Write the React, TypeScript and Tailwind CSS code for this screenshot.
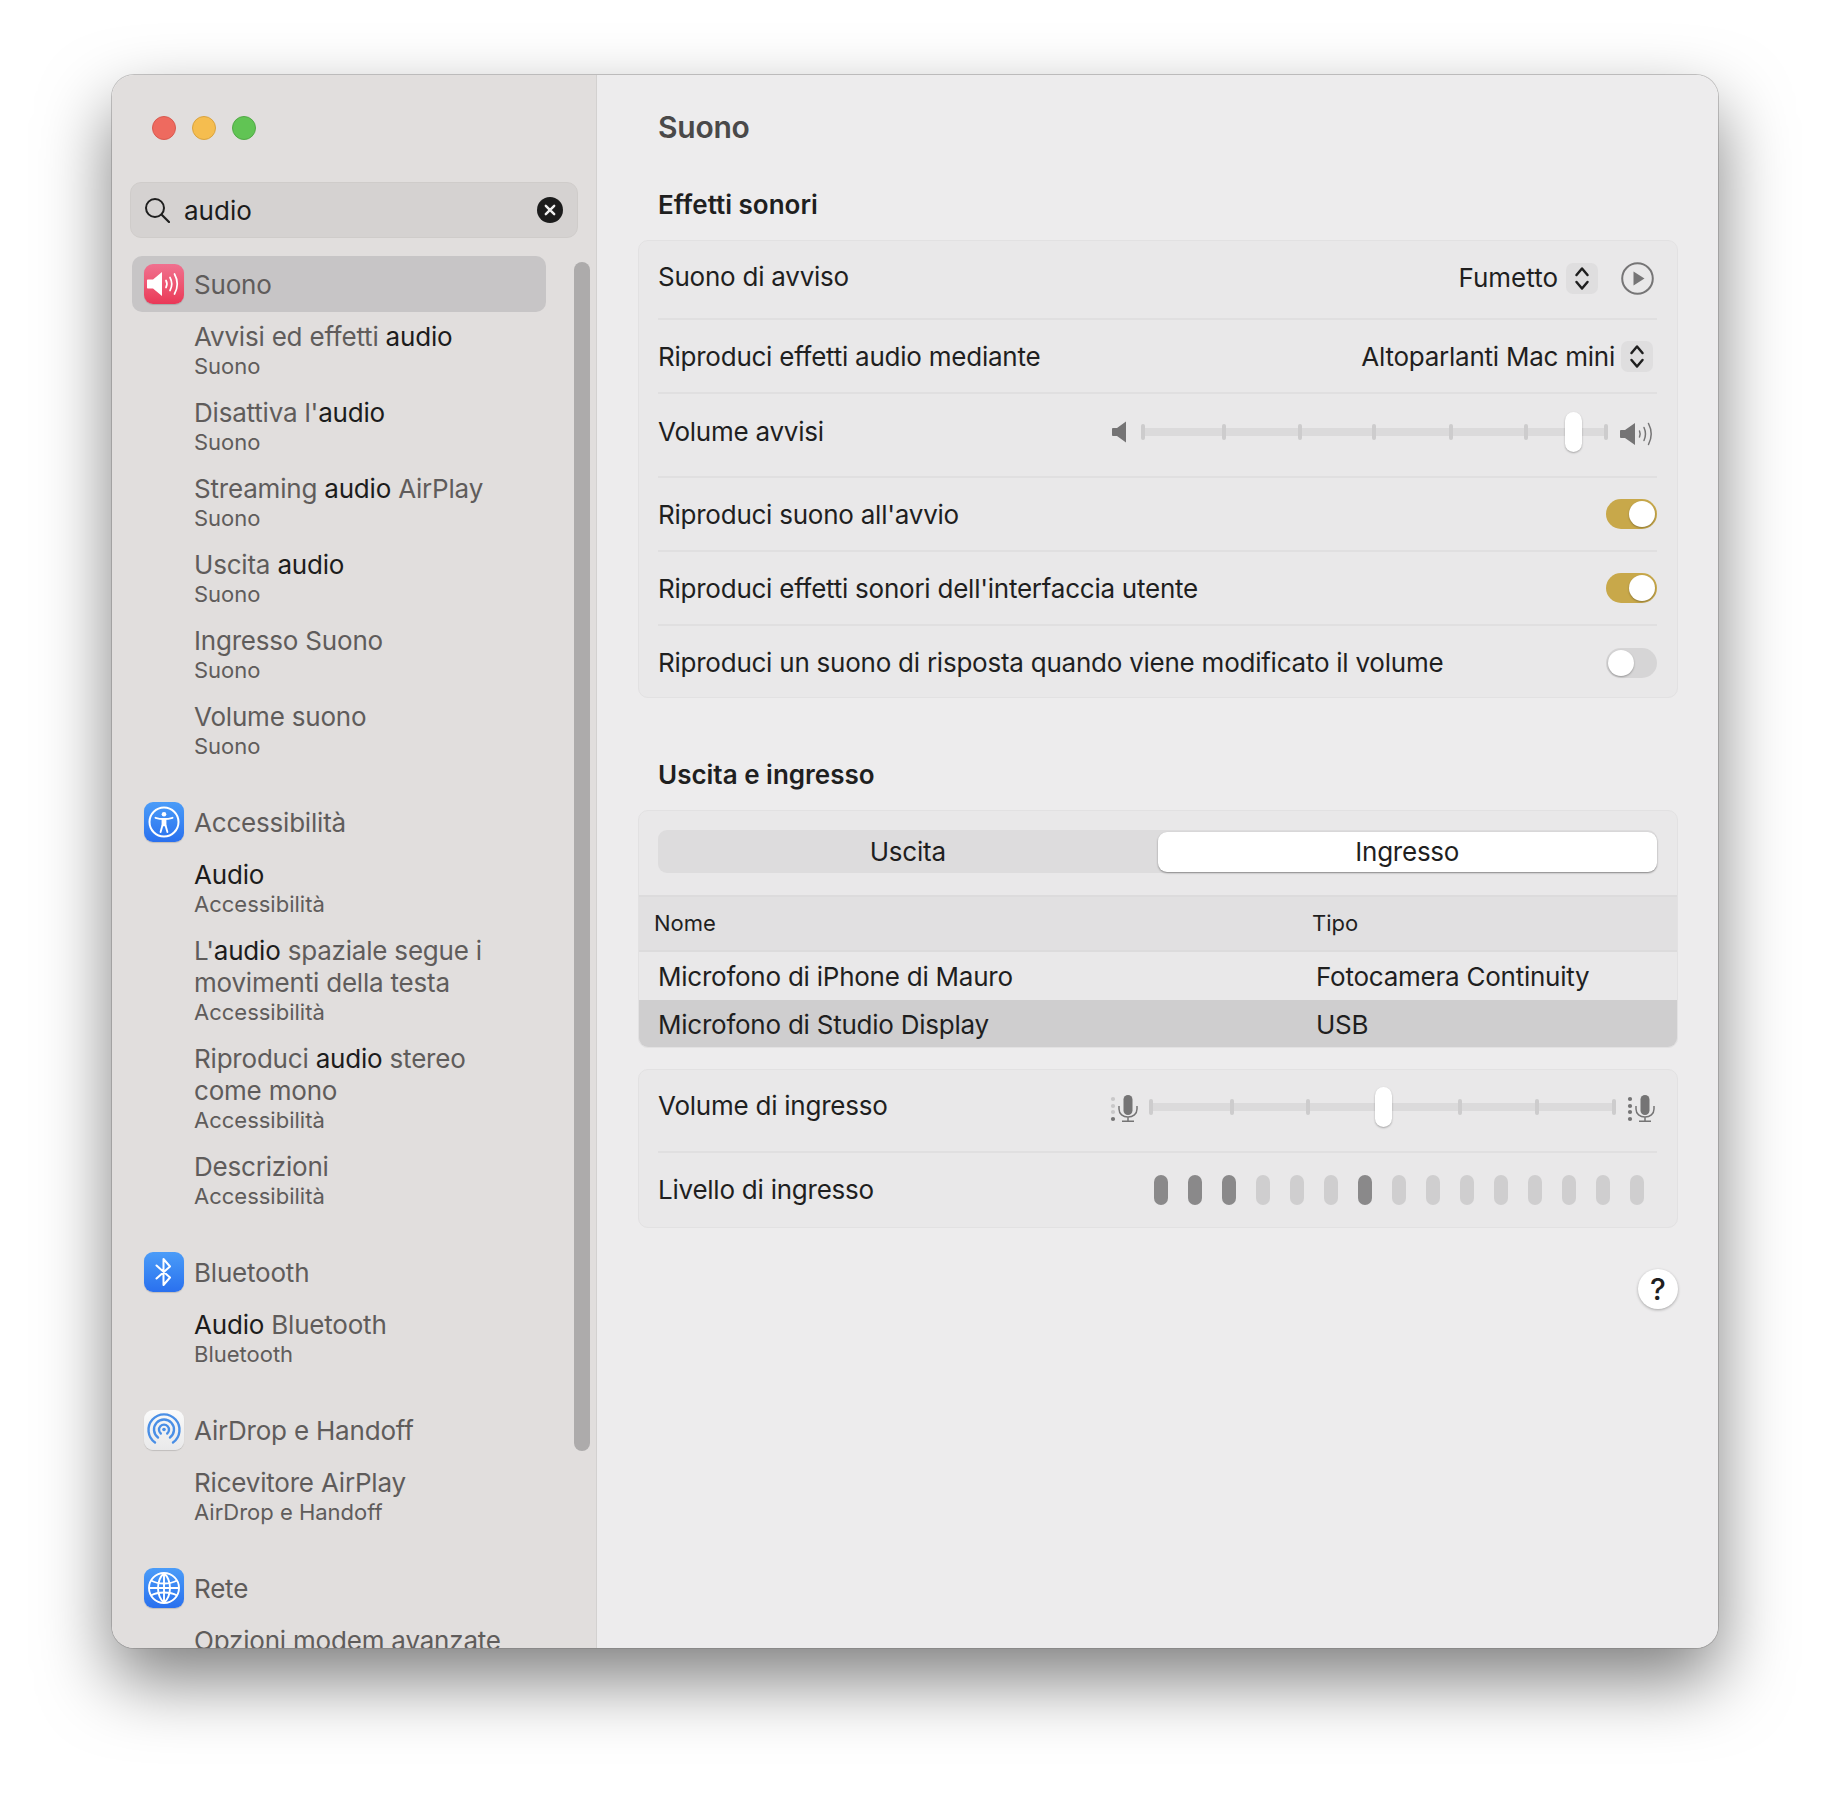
import React from 'react';

const FONT = 'font-["Inter","Liberation_Sans",sans-serif]';

// --- Sidebar data ---
type Part = { t: string; strong?: boolean };
type Item = { lines: Part[][]; sub?: string };
type Group = { name: string; icon: React.ReactNode; selected?: boolean; items: Item[] };

const SpeakerGlyph = () => (
  <svg viewBox="0 0 40 40" className="w-10 h-10">
    <path d="M4 15.5h5l9-7.5v24L9 24.5H4c-.6 0-1-.4-1-1v-7c0-.6.4-1 1-1z" fill="#fff" />
    <g fill="none" stroke="#fff" strokeWidth="1.7" strokeLinecap="round">
      <path d="M22 16.5c1.2 2.2 1.2 4.8 0 7" />
      <path d="M26 13.5c2.2 4 2.2 9 0 13" />
      <path d="M30.5 10c3.4 6.2 3.4 13.8 0 20" />
    </g>
  </svg>
);

const AccessGlyph = () => (
  <svg viewBox="0 0 40 40" className="w-10 h-10">
    <circle cx="20" cy="20" r="14.5" fill="none" stroke="#fff" strokeWidth="2" />
    <circle cx="20" cy="12.3" r="2.3" fill="#fff" />
    <path d="M11.5 15.8c5.5 1.6 11.5 1.6 17 0" fill="none" stroke="#fff" strokeWidth="1.9" strokeLinecap="round" />
    <path d="M17.6 16.8h4.8v6.2l-.3 1.2h-4.2l-.3-1.2z" fill="#fff" />
    <path d="M18.4 23.5L16.6 30M21.6 23.5L23.4 30" fill="none" stroke="#fff" strokeWidth="1.9" strokeLinecap="round" />
  </svg>
);

const BluetoothGlyph = () => (
  <svg viewBox="0 0 40 40" className="w-10 h-10">
    <path d="M12.5 13.5L26 25.5 19.5 33V7L26 14.5 12.5 26.5" fill="none" stroke="#fff" strokeWidth="2" strokeLinejoin="round" strokeLinecap="round" />
  </svg>
);

const AirDropGlyph = () => (
  <svg viewBox="0 0 40 40" className="w-10 h-10">
    <g fill="none" stroke="#4a8fe6" strokeWidth="2.4" strokeLinecap="round">
      <path d="M11 32.5A15.5 15.5 0 1 1 29 32.5" />
      <path d="M14 27.5A10 10 0 1 1 26 27.5" />
      <path d="M16.8 23.5A5 5 0 1 1 23.2 23.5" />
    </g>
    <circle cx="20" cy="19.5" r="1.8" fill="#4a8fe6" />
  </svg>
);

const GlobeGlyph = () => (
  <svg viewBox="0 0 40 40" className="w-10 h-10">
    <g fill="none" stroke="#fff" strokeWidth="1.9">
      <circle cx="20" cy="20" r="15" />
      <path d="M20 5c-8 8-8 22 0 30M20 5c8 8 8 22 0 30M20 5v30" />
      <path d="M7 12.5c7 4 19 4 26 0M5 20h30M7 27.5c7-4 19-4 26 0" />
    </g>
  </svg>
);

const IconBox = ({ className, children }: { className: string; children: React.ReactNode }) => (
  <div className={`w-10 h-10 rounded-[9px] flex items-center justify-center shrink-0 shadow-[0_1px_1px_rgba(0,0,0,0.15)] ${className}`}>
    {children}
  </div>
);

const BLUE = 'bg-linear-to-b from-[#4b9cf8] to-[#2a70ee]';

const groups: Group[] = [
  {
    name: 'Suono',
    selected: true,
    icon: <IconBox className="bg-linear-to-b from-[#f0708f] to-[#ea3757]"><SpeakerGlyph /></IconBox>,
    items: [
      { lines: [[{ t: 'Avvisi ed effetti ' }, { t: 'audio', strong: true }]], sub: 'Suono' },
      { lines: [[{ t: "Disattiva l'" }, { t: 'audio', strong: true }]], sub: 'Suono' },
      { lines: [[{ t: 'Streaming ' }, { t: 'audio', strong: true }, { t: ' AirPlay' }]], sub: 'Suono' },
      { lines: [[{ t: 'Uscita ' }, { t: 'audio', strong: true }]], sub: 'Suono' },
      { lines: [[{ t: 'Ingresso Suono' }]], sub: 'Suono' },
      { lines: [[{ t: 'Volume suono' }]], sub: 'Suono' },
    ],
  },
  {
    name: 'Accessibilità',
    icon: <IconBox className={BLUE}><AccessGlyph /></IconBox>,
    items: [
      { lines: [[{ t: 'Audio', strong: true }]], sub: 'Accessibilità' },
      {
        lines: [
          [{ t: "L'" }, { t: 'audio', strong: true }, { t: ' spaziale segue i' }],
          [{ t: 'movimenti della testa' }],
        ],
        sub: 'Accessibilità',
      },
      {
        lines: [
          [{ t: 'Riproduci ' }, { t: 'audio', strong: true }, { t: ' stereo' }],
          [{ t: 'come mono' }],
        ],
        sub: 'Accessibilità',
      },
      { lines: [[{ t: 'Descrizioni' }]], sub: 'Accessibilità' },
    ],
  },
  {
    name: 'Bluetooth',
    icon: <IconBox className={BLUE}><BluetoothGlyph /></IconBox>,
    items: [{ lines: [[{ t: 'Audio', strong: true }, { t: ' Bluetooth' }]], sub: 'Bluetooth' }],
  },
  {
    name: 'AirDrop e Handoff',
    icon: <IconBox className="bg-linear-to-b from-[#fafafa] to-[#e9e9ea]"><AirDropGlyph /></IconBox>,
    items: [{ lines: [[{ t: 'Ricevitore AirPlay' }]], sub: 'AirDrop e Handoff' }],
  },
  {
    name: 'Rete',
    icon: <IconBox className={BLUE}><GlobeGlyph /></IconBox>,
    items: [{ lines: [[{ t: 'Opzioni modem avanzate' }]] }],
  },
];

const Sidebar = () => (
  <aside className="relative w-[485px] shrink-0 h-full bg-[#e1dedd] border-r border-[#d3d1d0] overflow-hidden">
    {/* Traffic lights */}
    <div className="flex gap-4 pl-10 pt-[41px]">
      <div className="w-6 h-6 rounded-full bg-[#ee6a5f] border border-[#d85a50]" />
      <div className="w-6 h-6 rounded-full bg-[#f5bd4f] border border-[#d9a33f]" />
      <div className="w-6 h-6 rounded-full bg-[#61c454] border border-[#52a947]" />
    </div>

    {/* Search */}
    <div className="mt-[42px] mx-[18px] h-14 rounded-[11px] bg-[#d5d2d1] border border-[#cfccca] flex items-center pl-[13px] pr-[14px]">
      <svg viewBox="0 0 26 26" className="w-[26px] h-[26px] shrink-0">
        <circle cx="11" cy="11" r="9" fill="none" stroke="#1f1f1f" strokeWidth="2" />
        <path d="M17.5 17.5L25 25" stroke="#1f1f1f" strokeWidth="2.2" strokeLinecap="round" />
      </svg>
      <span className="ml-[14px] text-[26px] text-[#1c1c1c] flex-1">audio</span>
      <svg viewBox="0 0 26 26" className="w-[26px] h-[26px] shrink-0">
        <circle cx="13" cy="13" r="13" fill="#1c1c1c" />
        <path d="M8.8 8.8l8.4 8.4M17.2 8.8l-8.4 8.4" stroke="#eee" strokeWidth="2.4" strokeLinecap="round" />
      </svg>
    </div>

    {/* Results */}
    <div className="mt-[18px] ml-5 w-[414px] flex flex-col gap-5">
      {groups.map((g) => (
        <div key={g.name}>
          <div className={`h-14 rounded-[10px] flex items-center pl-3 gap-[10px] text-[26px] tracking-[-0.2px] text-[#5f5c5b] ${g.selected ? 'bg-[#c7c5c6]' : ''}`}>
            {g.icon}
            <span>{g.name}</span>
          </div>
          <div className="mt-[6px] pl-[62px]">
            {g.items.map((item, i) => (
              <div key={i} className="pt-[3px] pb-[15px]">
                {item.lines.map((line, j) => (
                  <div key={j} className="text-[26px] leading-8 tracking-[-0.2px] text-[#5f5c5b] whitespace-nowrap">
                    {line.map((p, k) => (
                      <span key={k} className={p.strong ? 'text-[#1c1c1c]' : ''}>{p.t}</span>
                    ))}
                  </div>
                ))}
                {item.sub && <div className="text-[22px] leading-[26px] text-[#5f5c5b]">{item.sub}</div>}
              </div>
            ))}
          </div>
        </div>
      ))}
    </div>

    {/* Overlay scrollbar */}
    <div className="absolute left-[462px] top-[187px] w-4 h-[1189px] rounded-full bg-[#adabab]" />
  </aside>
);

// --- Small controls ---
const Stepper = () => (
  <div className="w-8 h-[31px] rounded-[7px] bg-[#dfdedf] flex items-center justify-center">
    <svg viewBox="0 0 16 27" className="w-4 h-[27px]">
      <path d="M2.5 10L8 3.5 13.5 10M2.5 17L8 23.5 13.5 17" fill="none" stroke="#1f1f1f" strokeWidth="2.5" strokeLinecap="round" strokeLinejoin="round" />
    </svg>
  </div>
);

const Toggle = ({ on }: { on: boolean }) => (
  <div className={`w-[51px] h-[30px] rounded-full flex items-center px-[2px] ${on ? 'bg-[#c8a84a] justify-end' : 'bg-[#d6d5d6] justify-start'}`}>
    <div className="w-[26px] h-[26px] rounded-full bg-white shadow-[0_1px_2px_rgba(0,0,0,0.3)]" />
  </div>
);

const Slider = ({ ticks, thumb }: { ticks: number[]; thumb: number }) => (
  <div className="relative w-[467px] h-10">
    <div className="absolute left-0 right-0 top-4 h-2 bg-[#dbdadb]" />
    {ticks.map((x) => (
      <div key={x} className="absolute top-3 w-1 h-4 rounded-sm bg-[#cdcccd]" style={{ left: x }} />
    ))}
    <div className="absolute top-0 w-[17px] h-10 rounded-full bg-white shadow-[0_1px_2px_rgba(0,0,0,0.3)]" style={{ left: thumb }} />
  </div>
);

const SpeakerLow = () => (
  <svg viewBox="0 0 15 22" className="w-[15px] h-[22px]">
    <path d="M1 7h4l9-6.5v21L5 15H1c-.5 0-1-.5-1-1V8c0-.5.5-1 1-1z" fill="#757475" />
  </svg>
);

const SpeakerHigh = () => (
  <svg viewBox="0 0 33 24" className="w-[33px] h-6">
    <path d="M1 8h4l10-7v22L5 16H1c-.5 0-1-.5-1-1V9c0-.5.5-1 1-1z" fill="#757475" />
    <g fill="none" stroke="#757475" strokeWidth="1.5" strokeLinecap="round">
      <path d="M19.5 9c.9 2 .9 4 0 6" />
      <path d="M24 5.5c1.8 4 1.8 9 0 13" />
      <path d="M28.5 1.5c3.4 6.6 3.4 14.4 0 21" />
    </g>
  </svg>
);

const Mic = ({ level }: { level: number }) => (
  <svg viewBox="0 0 29 30" className="w-[29px] h-[30px]">
    {[7, 14, 20, 27].map((y, i) => (
      <circle key={y} cx="3" cy={y} r="2.1" fill={3 - i < level ? '#757475' : '#c9c8c9'} />
    ))}
    <rect x="13.5" y="3" width="9" height="20" rx="4.5" fill="#757475" />
    <path d="M9 14v3c0 5 4 8 9 8s9-3 9-8v-3M18 25v4M12 29.2h12" fill="none" stroke="#757475" strokeWidth="1.5" />
  </svg>
);

const Row = ({ className, label, labelClass = '', children }: { className: string; label: string; labelClass?: string; children?: React.ReactNode }) => (
  <div className={`ml-[19px] mr-5 flex items-center justify-between ${className}`}>
    <span className={labelClass}>{label}</span>
    <div className="flex items-center">{children}</div>
  </div>
);

const Card = ({ className, children }: { className: string; children: React.ReactNode }) => (
  <div className={`rounded-[10px] bg-[#e9e8e9] border border-[#e2e1e2] overflow-hidden text-[26px] tracking-[-0.24px] text-[#1f1f1f] ${className}`}>
    {children}
  </div>
);

const Heading = ({ className, children }: { className: string; children: React.ReactNode }) => (
  <h2 className={`pl-5 text-[26px] leading-8 font-semibold text-[#1f1f1f] ${className}`}>{children}</h2>
);

const DIVIDER = 'border-b-2 border-[#e0dfe0]';
const bars = [1, 1, 1, 0, 0, 0, 1, 0, 0, 0, 0, 0, 0, 0, 0];

const Content = () => (
  <main className="flex-1 h-full bg-[#edeced] pl-[41px] pr-10 pt-[34px] flex flex-col">
    <h1 className="pl-5 text-[30px] leading-9 font-semibold tracking-[-0.24px] text-[#4a4949]">Suono</h1>

    <Heading className="mt-11">Effetti sonori</Heading>
    <Card className="mt-[19px] h-[458px]">
      <Row className={`h-[79px] pb-[3px] ${DIVIDER}`} label="Suono di avviso" labelClass="pb-[3px]">
        <span className="mr-[8px] pb-[2px] tracking-normal">Fumetto</span>
        <Stepper />
        <svg viewBox="0 0 33 33" className="w-[33px] h-[33px] ml-[23px] mr-[3px]">
          <circle cx="16.5" cy="16.5" r="15.3" fill="none" stroke="#767576" strokeWidth="2" />
          <path d="M12.5 9.5l11 7-11 7z" fill="#767576" />
        </svg>
      </Row>
      <Row className={`h-[74px] ${DIVIDER}`} label="Riproduci effetti audio mediante">
        <span className="mr-[6px]">Altoparlanti Mac mini</span>
        <div className="mr-[4px]"><Stepper /></div>
      </Row>
      <Row className={`h-[84px] pb-[6px] ${DIVIDER}`} label="Volume avvisi" labelClass="pb-[2px]">
        <SpeakerLow />
        <div className="mx-[14px]"><Slider ticks={[0, 81, 157, 231, 308, 383, 463]} thumb={424} /></div>
        <div className="-ml-[2px] mr-[4px] mt-1"><SpeakerHigh /></div>
      </Row>
      <Row className={`h-[74px] ${DIVIDER}`} label="Riproduci suono all'avvio"><Toggle on /></Row>
      <Row className={`h-[74px] ${DIVIDER}`} label="Riproduci effetti sonori dell'interfaccia utente"><Toggle on /></Row>
      <Row className="h-[71px] pt-[3px]" label="Riproduci un suono di risposta quando viene modificato il volume" labelClass="pb-[2px]"><Toggle on={false} /></Row>
    </Card>

    <Heading className="mt-[61px]">Uscita e ingresso</Heading>
    <Card className="mt-[19px] h-[238px]">
      <div className="h-[84px] pt-[19px] pl-[19px] pr-5">
        <div className="h-[43px] rounded-[9px] bg-[#dddcdd] flex items-center">
          <div className="flex-1 text-center">Uscita</div>
          <div className="flex-1 h-10 rounded-[9px] bg-white shadow-[0_1px_2px_rgba(0,0,0,0.4)] flex items-center justify-center">Ingresso</div>
        </div>
      </div>
      <div className="h-[57px] bg-[#e1e0e1] border-y-2 border-[#dcdbdc] flex items-center pl-[15px] text-[22px] tracking-normal">
        <span className="w-[658px]">Nome</span>
        <span>Tipo</span>
      </div>
      <div className="h-12 flex items-center pl-[19px]">
        <span className="w-[658px]">Microfono di iPhone di Mauro</span>
        <span>Fotocamera Continuity</span>
      </div>
      <div className="h-[47px] bg-[#cfcecf] flex items-center pl-[19px] pt-[2px]">
        <span className="w-[658px]">Microfono di Studio Display</span>
        <span>USB</span>
      </div>
    </Card>

    <Card className="mt-[21px] h-[159px]">
      <Row className={`h-[83px] pb-2 ${DIVIDER}`} label="Volume di ingresso" labelClass="pb-[2px]">
        <Mic level={1} />
        <div className="ml-[10px] mr-[11px]"><Slider ticks={[0, 81, 157, 309, 386, 463]} thumb={226} /></div>
        <div className="mr-[1px]"><Mic level={4} /></div>
      </Row>
      <Row className="h-[74px]" label="Livello di ingresso" labelClass="pb-[1px]">
        <div className="flex gap-5 mr-[13px]">
          {bars.map((on, i) => (
            <div key={i} className={`w-[14px] h-[30px] rounded-full ${on ? 'bg-[#8a898a]' : 'bg-[#cfcecf]'}`} />
          ))}
        </div>
      </Row>
    </Card>

    <div className="mt-[41px] self-end w-10 h-10 rounded-full bg-white shadow-[0_1px_3px_rgba(0,0,0,0.3)] flex items-center justify-center text-[30px] font-medium text-[#1f1f1f]">?</div>
  </main>
);

export default function App() {
  return (
    <div className={`w-[1830px] h-[1796px] bg-white pl-[112px] pt-[75px] ${FONT}`}>
      <div className="w-[1606px] h-[1573px] rounded-[22px] overflow-hidden flex shadow-[0_0_0_1px_rgba(120,118,118,0.4),0_32px_70px_rgba(0,0,0,0.5)]">
        <Sidebar />
        <Content />
      </div>
    </div>
  );
}
